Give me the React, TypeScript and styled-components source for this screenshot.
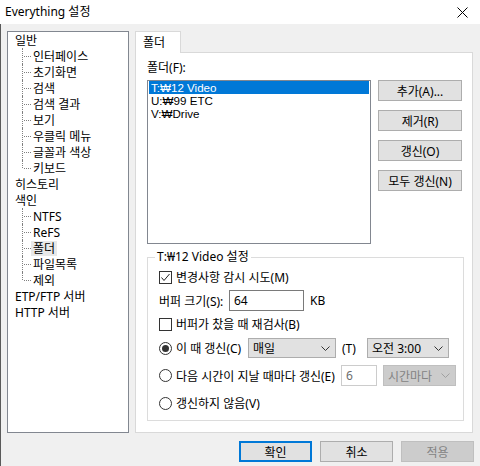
import React from "react";
import styled, { createGlobalStyle } from "styled-components";

type TreeItem = {
  label: string;
  level: 0 | 1;
  last?: boolean;
  selected?: boolean;
};

const tree: TreeItem[] = [
  { label: "일반", level: 0 },
  { label: "인터페이스", level: 1 },
  { label: "초기화면", level: 1 },
  { label: "검색", level: 1 },
  { label: "검색 결과", level: 1 },
  { label: "보기", level: 1 },
  { label: "우클릭 메뉴", level: 1 },
  { label: "글꼴과 색상", level: 1 },
  { label: "키보드", level: 1, last: true },
  { label: "히스토리", level: 0 },
  { label: "색인", level: 0 },
  { label: "NTFS", level: 1 },
  { label: "ReFS", level: 1 },
  { label: "폴더", level: 1, selected: true },
  { label: "파일목록", level: 1 },
  { label: "제외", level: 1, last: true },
  { label: "ETP/FTP 서버", level: 0 },
  { label: "HTTP 서버", level: 0 },
];

const folders = ["T:₩12 Video", "U:₩99 ETC", "V:₩Drive"];

function Chevron({ color = "#333" }: { color?: string }) {
  return (
    <svg width="9" height="5" viewBox="0 0 9 5">
      <polyline points="0.5,0.5 4.5,4.5 8.5,0.5" fill="none" stroke={color} strokeWidth="1" />
    </svg>
  );
}

function Check({ checked }: { checked?: boolean }) {
  return (
    <CheckBox>
      {checked && (
        <svg width="11" height="11" viewBox="0 0 11 11">
          <polyline points="1.5,5.5 4,8.5 9.5,2" fill="none" stroke="#222" strokeWidth="1" />
        </svg>
      )}
    </CheckBox>
  );
}

function App() {
  return (
    <>
      <GlobalStyle />
      <Window>
        <TitleBar>
          <span>Everything 설정</span>
          <CloseButton>
            <svg width="11" height="11" viewBox="0 0 11 11">
              <path d="M0.5 0.5 L10.5 10.5 M10.5 0.5 L0.5 10.5" stroke="#000" strokeWidth="1" />
            </svg>
          </CloseButton>
        </TitleBar>
        <Body>
          <Main>
            <Tree>
              {tree.map((item) => (
                <TreeRow key={item.label} $level={item.level} $last={item.last}>
                  <TreeLabel $selected={item.selected}>{item.label}</TreeLabel>
                </TreeRow>
              ))}
            </Tree>
            <TabArea>
              <TabStrip>
                <Tab>폴더</Tab>
              </TabStrip>
              <Panel>
                <FieldLabel>폴더(F):</FieldLabel>
                <FolderRow>
                  <ListBox>
                    {folders.map((f, i) => (
                      <ListItem key={f} $selected={i === 0}>
                        {f}
                      </ListItem>
                    ))}
                  </ListBox>
                  <ButtonColumn>
                    <Button>추가(A)...</Button>
                    <Button>제거(R)</Button>
                    <Button>갱신(O)</Button>
                    <Button>모두 갱신(N)</Button>
                  </ButtonColumn>
                </FolderRow>
                <Group>
                  <Legend>T:₩12 Video 설정</Legend>
                  <Row $top={3}>
                    <Check checked />
                    <span>변경사항 감시 시도(M)</span>
                  </Row>
                  <Row $top={3} $h={21}>
                    <InlineLabel $w={70}>버퍼 크기(S):</InlineLabel>
                    <TextBox $w={75}>64</TextBox>
                    <InlineLabel $ml={6}>KB</InlineLabel>
                  </Row>
                  <Row $top={3}>
                    <Check />
                    <span>버퍼가 찼을 때 재검사(B)</span>
                  </Row>
                  <Row $top={4}>
                    <Radio $checked />
                    <InlineLabel $w={72}>이 때 갱신(C)</InlineLabel>
                    <Select $w={88}>
                      <span>매일</span>
                      <Chevron />
                    </Select>
                    <InlineLabel $w={25} $ml={6}>(T)</InlineLabel>
                    <Select $w={82}>
                      <span>오전 3:00</span>
                      <Chevron />
                    </Select>
                  </Row>
                  <Row $top={7} $h={21}>
                    <Radio />
                    <InlineLabel $w={165}>다음 시간이 지날 때마다 갱신(E)</InlineLabel>
                    <TextBox $w={36} $disabled>
                      6
                    </TextBox>
                    <Select $w={73} $disabled $ml={6} $h={21}>
                      <span>시간마다</span>
                      <Chevron color="#a0a0a0" />
                    </Select>
                  </Row>
                  <Row $top={7}>
                    <Radio />
                    <span>갱신하지 않음(V)</span>
                  </Row>
                </Group>
              </Panel>
            </TabArea>
          </Main>
          <Footer>
            <DialogButton $default>확인</DialogButton>
            <DialogButton>취소</DialogButton>
            <DialogButton $disabled>적용</DialogButton>
          </Footer>
        </Body>
      </Window>
    </>
  );
}

const GlobalStyle = createGlobalStyle`
  html, body {
    margin: 0;
    padding: 0;
    background: #f0f0f0;
  }
  body {
    font-family: "Noto Sans", "Noto Sans CJK KR", sans-serif;
    font-size: 12px;
    color: #000;
  }
`;

const Window = styled.div`
  width: 480px;
  height: 466px;
  display: flex;
  flex-direction: column;
  overflow: hidden;
`;

const TitleBar = styled.div`
  height: 24px;
  background: #fff;
  display: flex;
  align-items: center;
  justify-content: space-between;
  padding-left: 5px;
  line-height: 16px;
`;

const CloseButton = styled.div`
  width: 46px;
  height: 24px;
  display: flex;
  align-items: center;
  justify-content: center;
  margin-right: -5px;
`;

const Body = styled.div`
  flex: 1;
  display: flex;
  flex-direction: column;
  border-left: 1px solid #5a5a5a;
`;

const Main = styled.div`
  display: flex;
  gap: 6px;
  padding: 7px 7px 0 6px;
`;

const Tree = styled.div`
  box-sizing: border-box;
  width: 122px;
  height: 402px;
  background: #fff;
  border: 1px solid #828790;
  padding: 0 0 0 5px;
`;

const TreeRow = styled.div<{ $level: number; $last?: boolean }>`
  position: relative;
  height: 16px;
  display: flex;
  align-items: center;
  padding-left: ${(p) => (p.$level === 1 ? 18 : 0)}px;

  ${(p) =>
    p.$level === 1 &&
    `
    &::before {
      content: "";
      position: absolute;
      left: 9px;
      top: 0;
      height: ${p.$last ? "8px" : "16px"};
      border-left: 1px dotted #808080;
    }
    &::after {
      content: "";
      position: absolute;
      left: 11px;
      top: 8px;
      width: 7px;
      border-top: 1px dotted #808080;
    }
  `}
`;

const TreeLabel = styled.span<{ $selected?: boolean }>`
  padding: 0 2px;
  line-height: 15px;
  background: ${(p) => (p.$selected ? "#e8e8e8" : "transparent")};
  white-space: nowrap;
`;

const TabArea = styled.div`
  width: 338px;
  height: 402px;
  display: flex;
  flex-direction: column;
`;

const TabStrip = styled.div`
  height: 21px;
  display: flex;
  align-items: flex-end;
  position: relative;
  z-index: 1;
`;

const Tab = styled.div`
  box-sizing: border-box;
  width: 46px;
  height: 22px;
  margin-bottom: -1px;
  background: #fff;
  border: 1px solid #d9d9d9;
  border-bottom: none;
  padding: 3px 0 0 7px;
  line-height: 16px;
`;

const Panel = styled.div`
  flex: 1;
  box-sizing: border-box;
  background: #fff;
  border: 1px solid #d9d9d9;
  padding: 7px 9px 0 11px;
`;

const FieldLabel = styled.div`
  line-height: 16px;
  margin-bottom: 4px;
`;

const FolderRow = styled.div`
  display: flex;
  gap: 7px;
`;

const ListBox = styled.div`
  box-sizing: border-box;
  width: 224px;
  height: 164px;
  border: 1px solid #828790;
  background: #fff;
  padding: 0 1px;
`;

const ListItem = styled.div<{ $selected?: boolean }>`
  height: 13px;
  line-height: 13px;
  padding-left: 2px;
  font-family: "Liberation Sans", "Noto Sans", "Noto Sans CJK KR", sans-serif;
  font-size: 11.6px;
  white-space: nowrap;
  overflow: hidden;
  background: ${(p) => (p.$selected ? "#0078d7" : "transparent")};
  color: ${(p) => (p.$selected ? "#fff" : "#000")};
`;

const ButtonColumn = styled.div`
  display: flex;
  flex-direction: column;
  gap: 9px;
`;

const Button = styled.div`
  box-sizing: border-box;
  width: 84px;
  height: 21px;
  background: #e1e1e1;
  border: 1px solid #adadad;
  display: flex;
  align-items: center;
  justify-content: center;
  white-space: nowrap;
`;

const Group = styled.fieldset`
  box-sizing: border-box;
  width: 317px;
  height: 171px;
  margin: 6px 0 0 0;
  border: 1px solid #dcdcdc;
  padding: 0 0 0 11px;
  min-width: 0;
`;

const Legend = styled.legend`
  padding: 0 2px;
  margin-left: -4px;
  line-height: 14px;
`;

const Row = styled.div<{ $top: number; $h?: number }>`
  display: flex;
  align-items: center;
  height: ${(p) => p.$h ?? 20}px;
  margin-top: ${(p) => p.$top}px;
  white-space: nowrap;
`;

const CheckBox = styled.span`
  box-sizing: border-box;
  width: 13px;
  height: 13px;
  border: 1px solid #333;
  background: #fff;
  margin-right: 4px;
  display: flex;
  align-items: center;
  justify-content: center;
  flex: none;
`;

const Radio = styled.span<{ $checked?: boolean }>`
  box-sizing: border-box;
  width: 13px;
  height: 13px;
  border: 1px solid #333;
  border-radius: 50%;
  background: #fff;
  margin-right: 4px;
  display: flex;
  align-items: center;
  justify-content: center;
  flex: none;

  &::after {
    content: "";
    width: 7px;
    height: 7px;
    border-radius: 50%;
    background: ${(p) => (p.$checked ? "#333" : "transparent")};
  }
`;

const InlineLabel = styled.span<{ $w?: number; $ml?: number }>`
  width: ${(p) => (p.$w ? `${p.$w}px` : "auto")};
  margin-left: ${(p) => p.$ml ?? 0}px;
  flex: none;
`;

const TextBox = styled.div<{ $w: number; $disabled?: boolean }>`
  box-sizing: border-box;
  width: ${(p) => p.$w}px;
  height: 21px;
  border: 1px solid ${(p) => (p.$disabled ? "#cccccc" : "#7a7a7a")};
  background: #fff;
  color: ${(p) => (p.$disabled ? "#6d6d6d" : "#000")};
  padding-left: 4px;
  display: flex;
  align-items: center;
  flex: none;
`;

const Select = styled.div<{ $w: number; $disabled?: boolean; $ml?: number; $h?: number }>`
  box-sizing: border-box;
  width: ${(p) => p.$w}px;
  height: ${(p) => p.$h ?? 20}px;
  margin-left: ${(p) => p.$ml ?? 0}px;
  border: 1px solid ${(p) => (p.$disabled ? "#bfbfbf" : "#adadad")};
  background: ${(p) => (p.$disabled ? "#cccccc" : "#e1e1e1")};
  color: ${(p) => (p.$disabled ? "#838383" : "#000")};
  padding: 0 5px 0 4px;
  display: flex;
  align-items: center;
  justify-content: space-between;
  flex: none;
`;

const Footer = styled.div`
  display: flex;
  justify-content: flex-end;
  gap: 8px;
  padding: 8px 6px 0 0;
`;

const DialogButton = styled.div<{ $default?: boolean; $disabled?: boolean }>`
  box-sizing: border-box;
  width: 73px;
  height: 21px;
  display: flex;
  align-items: center;
  justify-content: center;
  background: ${(p) => (p.$disabled ? "#cccccc" : "#e1e1e1")};
  color: ${(p) => (p.$disabled ? "#838383" : "#000")};
  border: ${(p) =>
    p.$default ? "2px solid #0078d7" : p.$disabled ? "1px solid #bfbfbf" : "1px solid #adadad"};
`;

export default App;
